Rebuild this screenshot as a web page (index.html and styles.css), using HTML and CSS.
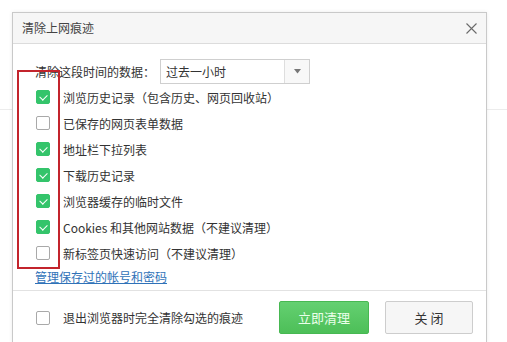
FILE: index.html
```html
<!DOCTYPE html>
<html lang="zh-CN">
<head>
<meta charset="utf-8">
<title>清除上网痕迹</title>
<link rel="stylesheet" href="styles.css">
</head>
<body>
<div class="bgline"></div>
<div class="dialog">
  <div class="header">
    <span class="title">清除上网痕迹</span>
    <svg class="close" width="11" height="11" viewBox="0 0 11 11"><path d="M0.5 0.5 L10.5 10.5 M10.5 0.5 L0.5 10.5" stroke="#6a6a6a" stroke-width="1.1" fill="none"/></svg>
  </div>
  <div class="content">
    <div class="range">
      <span class="range-label">清除这段时间的数据：</span>
      <div class="select">
        <span class="select-value">过去一小时</span>
        <span class="select-btn"><svg width="7" height="5" viewBox="0 0 7 5"><path d="M0 0 L7 0 L3.5 4.5 Z" fill="#777"/></svg></span>
      </div>
    </div>
    <ul class="items">
      <li><span class="cb on"></span>浏览历史记录（包含历史、网页回收站）</li>
      <li><span class="cb"></span>已保存的网页表单数据</li>
      <li><span class="cb on"></span>地址栏下拉列表</li>
      <li><span class="cb on"></span>下载历史记录</li>
      <li><span class="cb on"></span>浏览器缓存的临时文件</li>
      <li><span class="cb on"></span>Cookies 和其他网站数据（不建议清理）</li>
      <li><span class="cb"></span>新标签页快速访问（不建议清理）</li>
    </ul>
    <a class="link" href="#">管理保存过的帐号和密码</a>
  </div>
  <div class="footer">
    <label class="exit"><span class="cb"></span>退出浏览器时完全清除勾选的痕迹</label>
    <div class="buttons">
      <button class="btn primary">立即清理</button>
      <button class="btn">关 闭</button>
    </div>
  </div>
  <div class="highlight"></div>
</div>
</body>
</html>
```
FILE: styles.css
```css
* { box-sizing: border-box; }
html, body { margin: 0; padding: 0; background: #fff; }
body {
  width: 507px;
  height: 342px;
  overflow: hidden;
  position: relative;
  font-family: "Noto Sans CJK SC", "Noto Sans", sans-serif;
  font-size: 12px;
  color: #333;
  padding: 12px 0 0 12px;
}
.bgline {
  position: absolute;
  left: 0;
  right: 0;
  top: 109px;
  height: 1px;
  background: #ececec;
}
.dialog {
  position: relative;
  width: 475px;
  height: 331px;
  background: #fff;
  border: 1px solid #c9c9c9;
  box-shadow: 0 0 4px rgba(0,0,0,0.08);
  display: flex;
  flex-direction: column;
}
.header {
  height: 31px;
  background: #f6f6f6;
  border-bottom: 1px solid #dcdcdc;
  display: flex;
  align-items: center;
  justify-content: space-between;
  padding: 0 9px 0 9px;
}
.title { font-size: 12px; color: #444; line-height: 1; }
.close { display: block; }
.content {
  padding: 15px 0 0 22px;
  height: 246px;
}
.range {
  display: flex;
  align-items: center;
  height: 25px;
}
.range-label { width: 125px; line-height: 25px; }
.select {
  width: 150px;
  height: 25px;
  border: 1px solid #cfcfcf;
  display: flex;
  align-items: center;
  background: #fff;
}
.select-value { flex: 1; padding-left: 5px; line-height: 23px; }
.select-btn {
  width: 25px;
  height: 23px;
  border-left: 1px solid #dedede;
  background: #f8f8f8;
  display: flex;
  align-items: center;
  justify-content: center;
}
.select-btn svg { display: block; }
.items { list-style: none; margin: 0; padding: 0; }
.items li {
  height: 26px;
  display: flex;
  align-items: center;
  padding-left: 1px;
}
.cb {
  width: 14px;
  height: 14px;
  border: 1px solid #a9a9a9;
  border-radius: 2px;
  background: #fff;
  margin-right: 13px;
  flex: none;
  position: relative;
}
.cb.on {
  background: #34c46b;
  border-color: #34c46b;
}
.cb.on::after {
  content: "";
  position: absolute;
  left: 3px;
  top: 2px;
  width: 6px;
  height: 4px;
  border-left: 1.5px solid #fff;
  border-bottom: 1.5px solid #fff;
  transform: rotate(-45deg);
  transform-origin: center;
  top: 3px;
}
.link {
  display: inline-block;
  line-height: 22px;
  color: #2f72b8;
  text-decoration: underline;
}
.footer {
  border-top: 1px solid #e2e2e2;
  flex: 1;
  display: flex;
  align-items: flex-start;
  padding: 10px 13px 0 23px;
}
.exit {
  display: flex;
  align-items: center;
  height: 33px;
}
.buttons {
  margin-left: auto;
  display: flex;
  gap: 16px;
}
.btn {
  font-family: "Noto Sans CJK SC", "Noto Sans", sans-serif;
  font-size: 13px;
  width: 88px;
  height: 33px;
  border: 1px solid #cdcdcd;
  border-radius: 2px;
  background: #f6f6f6;
  color: #333;
  padding: 0;
}
.btn.primary {
  width: 90px;
  background: linear-gradient(#64d071, #4dbf58);
  border-color: #47b852;
  color: #eaffea;
}
.highlight {
  position: absolute;
  left: 4px;
  top: 57px;
  width: 43px;
  height: 199px;
  border: 2px solid #c3242c;
}
```
